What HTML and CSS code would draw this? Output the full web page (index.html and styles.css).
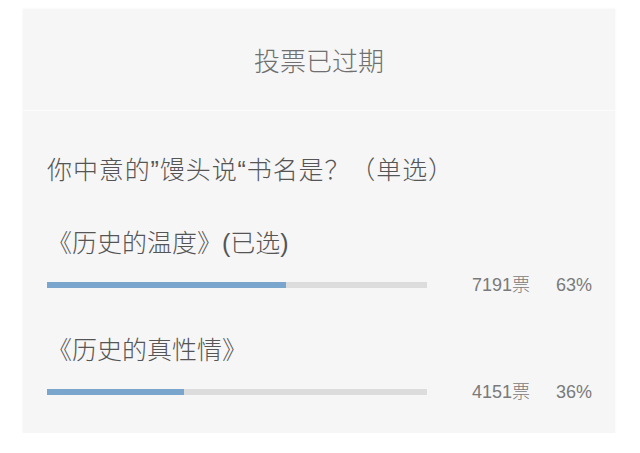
FILE: index.html
```html
<!DOCTYPE html>
<html>
<head>
  <meta charset="utf-8">
  <title>投票已过期</title>
  <link rel="stylesheet" href="styles.css">
</head>
<body>

<div class="vote-card">
  <div class="vote-header">投票已过期</div>

  <div class="vote-body">
    <div class="question">你中意的”馒头说“书名是？（单选）</div>

    <div class="option">
      <div class="option-label">《历史的温度》(已选)</div>
      <div class="option-row">
        <div class="bar"><div class="bar-fill" style="width: 63%"></div></div>
        <div class="stats">
          <span class="count">7191票</span>
          <span class="percent">63%</span>
        </div>
      </div>
    </div>

    <div class="option">
      <div class="option-label">《历史的真性情》</div>
      <div class="option-row">
        <div class="bar"><div class="bar-fill" style="width: 36%"></div></div>
        <div class="stats">
          <span class="count">4151票</span>
          <span class="percent">36%</span>
        </div>
      </div>
    </div>
  </div>
</div>

</body>
</html>
```

FILE: styles.css
```css
body {
  margin: 0;
  background: #ffffff;
  font-family: "Liberation Sans", "Noto Sans CJK SC", sans-serif;
  font-weight: 300;
  color: #555;
}

.vote-card {
  margin: 9px 0 0 23px;
  width: 592px;
  background: #f6f6f6;
  box-shadow: 0 0 2px rgba(0, 0, 0, 0.06);
}

.vote-header {
  height: 101px;
  display: flex;
  align-items: center;
  justify-content: center;
  font-size: 26px;
  color: #707070;
  border-bottom: 1px solid #fcfcfc;
}

.vote-body {
  padding: 43px 23px 29px 24px;
}

.question {
  font-size: 25px;
  line-height: 32px;
  letter-spacing: 0.9px;
  color: #555;
}

.option {
  margin-top: 41px;
}

.option + .option {
  margin-top: 37px;
}

.option-label {
  font-size: 25px;
  line-height: 32px;
  color: #555;
}

.option-row {
  display: flex;
  align-items: center;
  height: 24px;
  margin-top: 14px;
}

.bar {
  width: 380px;
  height: 6px;
  background: #dcdcdc;
}

.bar-fill {
  height: 100%;
  background: #7aa6cd;
}

.stats {
  flex: 1;
  display: flex;
  align-items: baseline;
  justify-content: flex-end;
  font-size: 18px;
  line-height: 24px;
  color: #7a7a7a;
}

.count {
  margin-right: 22px;
}

.percent {
  width: 40px;
  text-align: right;
}
```
